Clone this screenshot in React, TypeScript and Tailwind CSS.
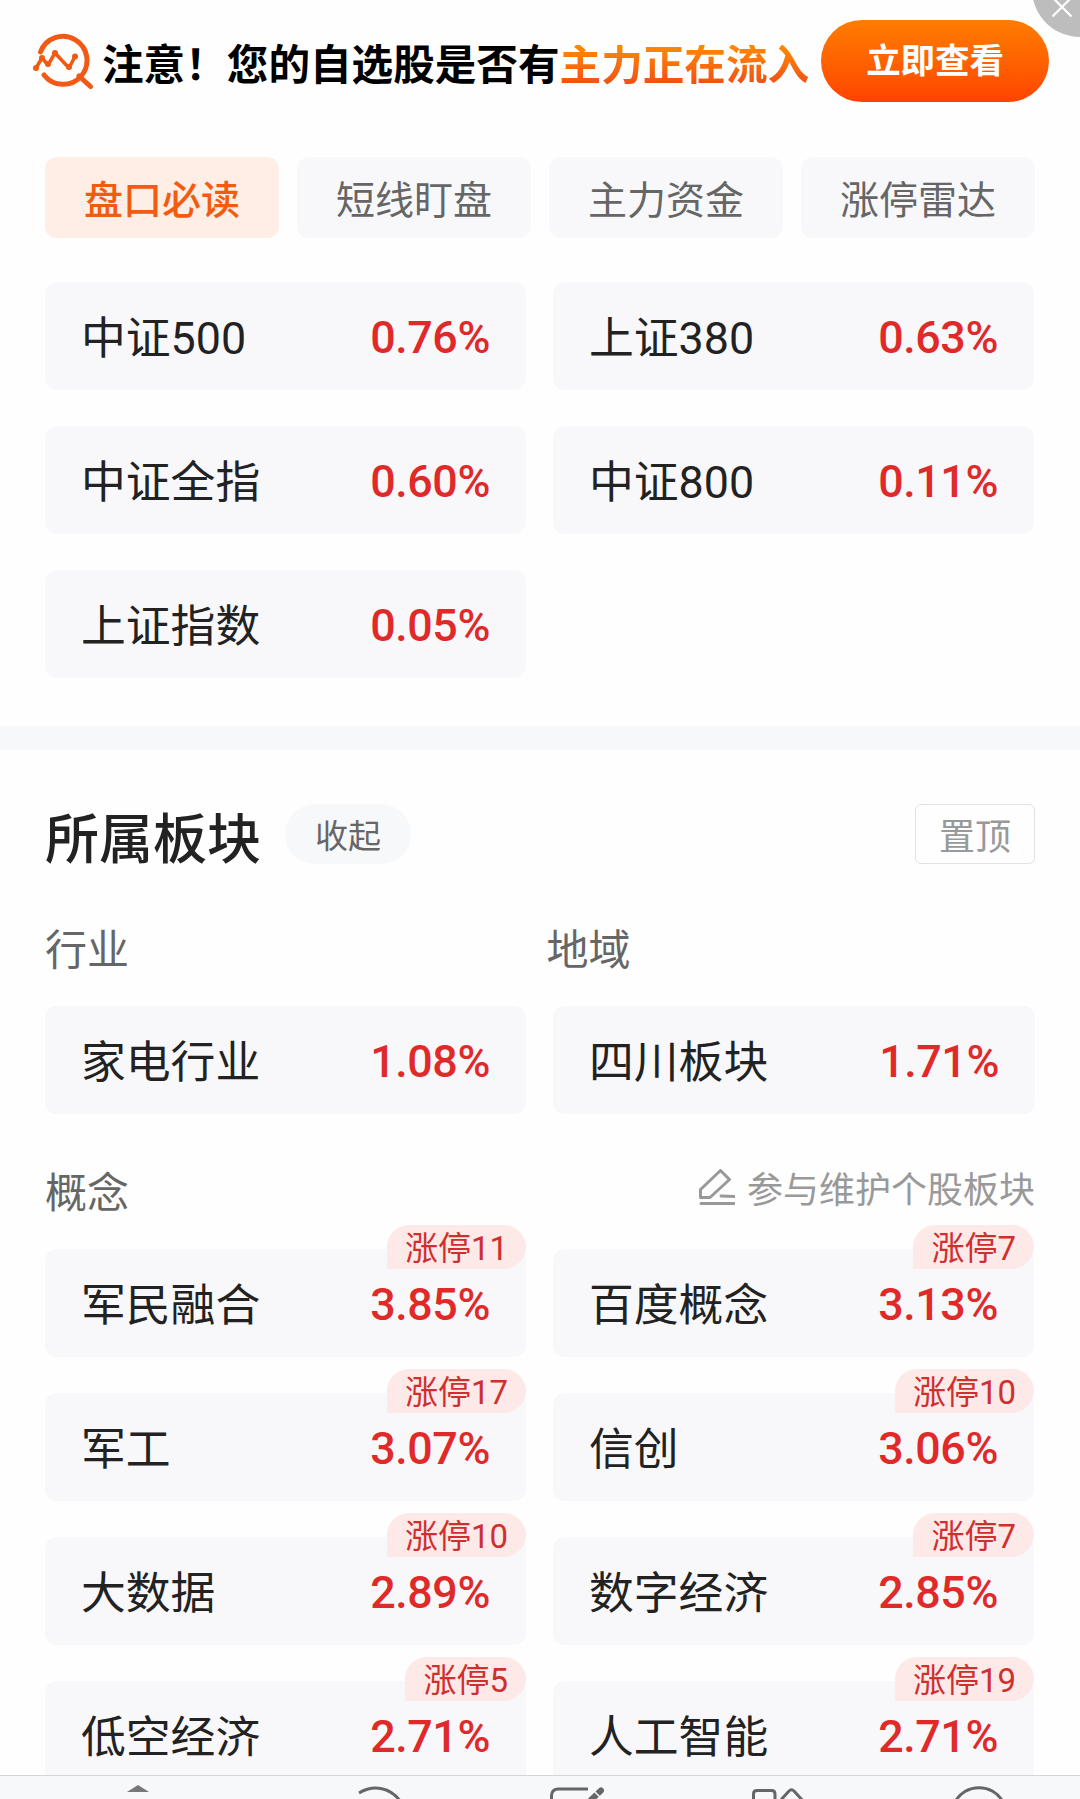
import clsx from "clsx";

interface Quote {
  name: string;
  change: string;
  limitUp?: number;
}

const tabs = ["盘口必读", "短线盯盘", "主力资金", "涨停雷达"];

const indices: Quote[] = [
  { name: "中证500", change: "0.76%" },
  { name: "上证380", change: "0.63%" },
  { name: "中证全指", change: "0.60%" },
  { name: "中证800", change: "0.11%" },
  { name: "上证指数", change: "0.05%" },
];

const concepts: Quote[] = [
  { name: "军民融合", change: "3.85%", limitUp: 11 },
  { name: "百度概念", change: "3.13%", limitUp: 7 },
  { name: "军工", change: "3.07%", limitUp: 17 },
  { name: "信创", change: "3.06%", limitUp: 10 },
  { name: "大数据", change: "2.89%", limitUp: 10 },
  { name: "数字经济", change: "2.85%", limitUp: 7 },
  { name: "低空经济", change: "2.71%", limitUp: 5 },
  { name: "人工智能", change: "2.71%", limitUp: 19 },
];

function QuoteCard({ name, change, limitUp }: Quote) {
  return (
    <div className="relative flex h-[108px] items-center justify-between rounded-xl bg-[#f8f8fb] pr-9 pl-9 leading-none">
      <span className="pt-[7px] text-[44.8px] text-[#222]">{name}</span>
      <span className="pt-[5px] text-[44.8px] font-medium tracking-[-0.4px] text-[#e02a2a]">{change}</span>
      {limitUp && (
        <span className="absolute -top-6 right-0 flex h-11 items-center rounded-[22px] rounded-bl-none bg-[#fde9e8] px-[18px] pt-[3px] text-[33px] leading-none text-[#d02f2f]">
          涨停{limitUp}
        </span>
      )}
    </div>
  );
}

function Banner() {
  return (
    <div className="relative flex h-[157px] items-start overflow-hidden pl-8">
      <svg className="mt-8 h-[62px] w-[62px] shrink-0" viewBox="0 0 62 62" fill="none" stroke="#f05a14">
        <path d="M8.5 20A24 24 0 1 1 12 43" strokeWidth="5" strokeLinecap="round" />
        <path d="M47 44L58.5 54.5" strokeWidth="5" strokeLinecap="round" />
        <path d="M4 36L10 26L16 33L23 21L37 36L43 24.5" strokeWidth="3.5" strokeLinejoin="round" />
        <g fill="#f05a14" stroke="none">
          <circle cx="4" cy="36" r="3" />
          <circle cx="10" cy="26" r="3" />
          <circle cx="16" cy="32" r="3" />
          <circle cx="23" cy="21" r="3" />
          <circle cx="37" cy="35" r="3" />
          <circle cx="43" cy="24.5" r="3" />
        </g>
      </svg>
      <p className="mt-[45px] ml-2 flex shrink-0 text-[41.6px] leading-[42px] font-bold whitespace-nowrap text-black">
        注意！您的自选股是否有
        <span className="bg-linear-to-b from-[#ff8a00] to-[#f04a14] bg-clip-text text-transparent">主力正在流入</span>
      </p>
      <button className="mt-5 ml-3 flex h-[82px] w-[228px] shrink-0 items-center justify-center rounded-full bg-linear-to-b from-[#ff7c00] to-[#ff4200] text-[34.5px] leading-none font-bold text-white">
        立即查看
      </button>
      <div className="absolute -top-[59px] left-[1032px] h-24 w-24 rounded-full bg-[#bdbdbd]" />
      <svg className="absolute top-[-4px] left-[1051px] h-[22px] w-[22px]" viewBox="0 0 22 22" stroke="#fff" strokeWidth="2.2">
        <path d="M1.5 1.5L20.5 20.5M20.5 1.5L1.5 20.5" />
      </svg>
    </div>
  );
}

function BottomNav() {
  return (
    <div className="absolute inset-x-0 bottom-0 h-6 overflow-hidden border-t border-[#d4d5d7] bg-[#f7f8fa]">
      <svg className="block" width="1080" height="23" viewBox="0 0 1080 23" fill="none" stroke="#666" strokeWidth="3">
        <path d="M127 16L138 9L149 16Z" fill="#77777b" stroke="none" />
        <path d="M359 17C374 8 391 12 400 25" />
        <path d="M551.5 26V20Q551.5 13 558.5 13H588" />
        <path d="M591 24L601 14.5" strokeWidth="6" strokeLinecap="round" />
        <path d="M593 14L600 21" stroke="#f7f8fa" strokeWidth="1.5" />
        <path d="M753.5 26V18Q753.5 14.5 757 14.5H771.5Q775 14.5 775 18V26" />
        <path d="M779 26L789 15Q791.5 12.5 794 15L804 26" />
        <path d="M955 26C965 7 993 7 1003 26" />
      </svg>
    </div>
  );
}

export default function App() {
  return (
    <div className="relative h-[1799px] w-[1080px] overflow-hidden bg-[#fefefe] font-[Roboto,'Noto_Sans_CJK_SC',sans-serif]">
      <Banner />

      <div className="grid grid-cols-4 gap-[18px] px-[45px]">
        {tabs.map((tab, i) => (
          <button
            key={tab}
            className={clsx(
              "flex h-[81px] items-center justify-center rounded-xl pt-2 text-[39px] leading-none",
              i === 0 ? "bg-[#ffeee6] font-medium text-[#f25b10]" : "bg-[#f8f8fb] text-[#666]"
            )}
          >
            {tab}
          </button>
        ))}
      </div>

      <div className="mt-11 grid grid-cols-2 gap-x-[27px] gap-y-9 pr-[46px] pl-[45px]">
        {indices.map((q) => (
          <QuoteCard key={q.name} {...q} />
        ))}
      </div>

      <div className="mt-12 h-6 bg-[#f7f8fa]" />

      {/* Related sectors */}
      <div className="mt-[54px] flex h-[60px] items-center px-[45px]">
        <h2 className="pt-3.5 text-[54px] leading-none font-medium text-[#222]">所属板块</h2>
        <button className="ml-6 flex h-[60px] w-[126px] items-center justify-center rounded-full bg-[#f7f8fa] pt-1 text-[33px] leading-none text-[#666]">
          收起
        </button>
        <button className="ml-auto flex h-[60px] w-[120px] items-center justify-center rounded-md border border-[#e2e2e2] pt-2 text-[36px] leading-none text-[#999]">
          置顶
        </button>
      </div>

      <div className="mt-[66px] grid grid-cols-2 gap-x-[13px] px-[45px] text-[42px] leading-[42px] text-[#666]">
        <span>行业</span>
        <span>地域</span>
      </div>
      <div className="mt-[34px] grid grid-cols-[481px_482px] gap-x-[27px] px-[45px]">
        <QuoteCard name="家电行业" change="1.08%" />
        <QuoteCard name="四川板块" change="1.71%" />
      </div>

      <div className="mt-14 flex h-[43px] items-center justify-between px-[45px]">
        <span className="pt-[5px] text-[42px] leading-[42px] text-[#666]">概念</span>
        <span className="flex items-center gap-3 pb-0.5 text-[36px] leading-none text-[#999]">
          <svg className="-mt-2 h-9 w-9" viewBox="0 0 36 36" fill="none" stroke="#999" strokeWidth="3" strokeLinejoin="round">
            <path d="M1.5 20.5L21.5 1.5L30.5 10.5L11 28.5H1.5Z" />
            <path d="M22 27L35 27.5M2 34.5H35" strokeLinecap="round" />
          </svg>
          参与维护个股板块
        </span>
      </div>
      <div className="mt-9 grid grid-cols-2 gap-x-[27px] gap-y-9 pr-[46px] pl-[45px]">
        {concepts.map((q) => (
          <QuoteCard key={q.name} {...q} />
        ))}
      </div>

      <BottomNav />
    </div>
  );
}
